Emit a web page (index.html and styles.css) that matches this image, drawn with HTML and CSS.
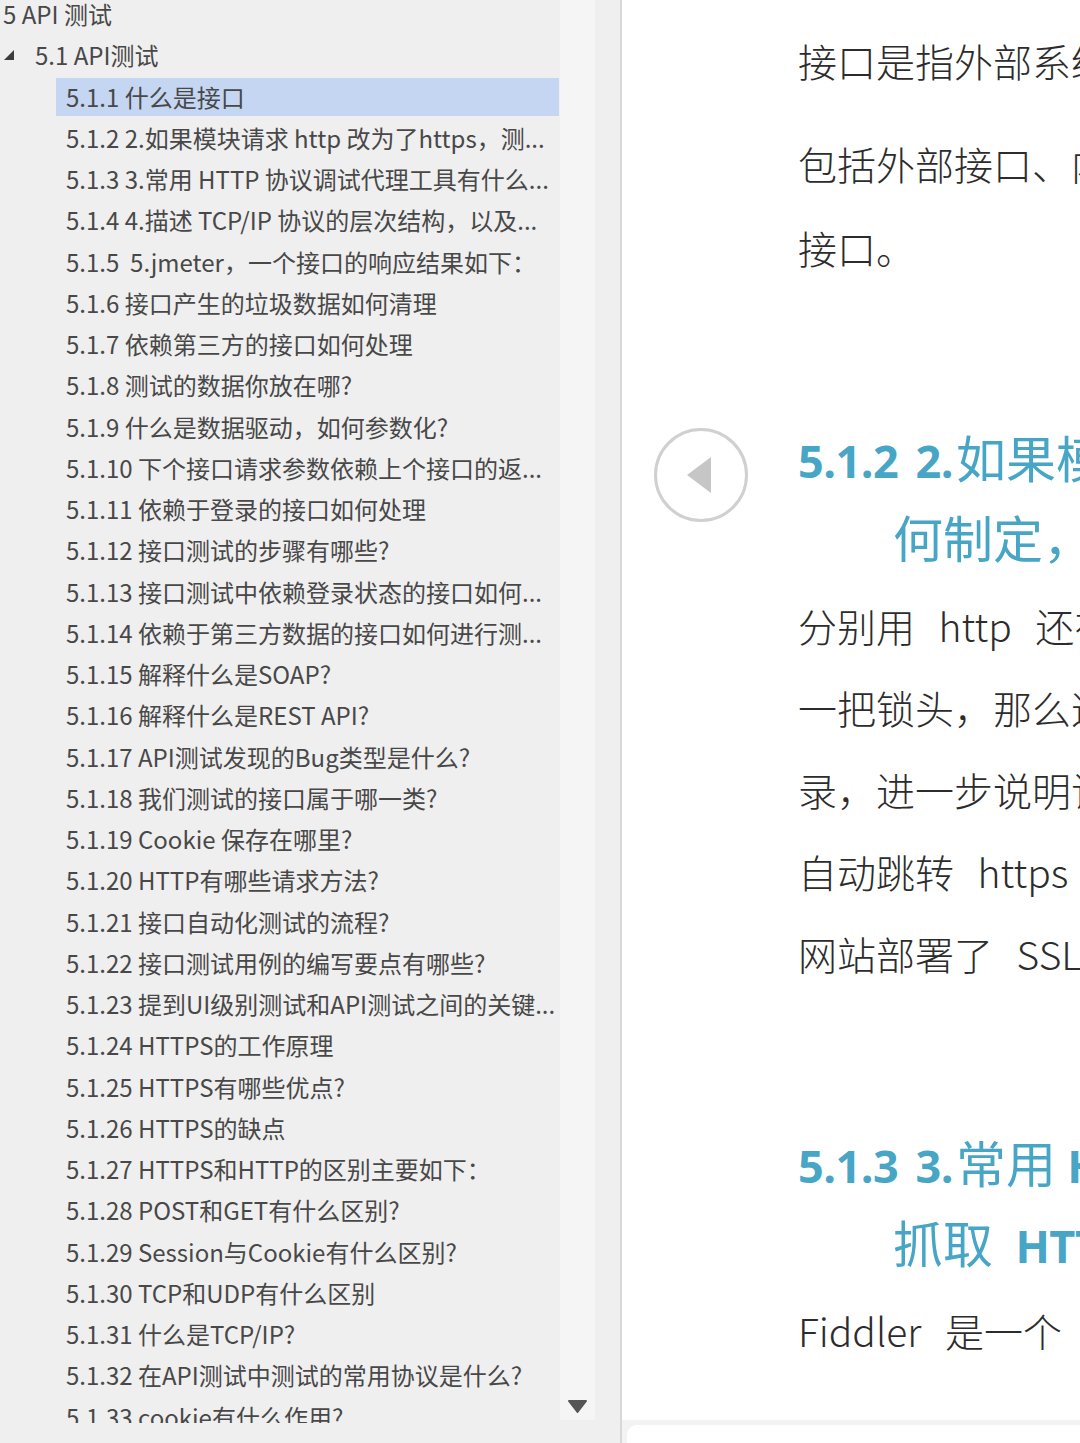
FILE: index.html
```html
<!DOCTYPE html>
<html lang="zh-CN">
<head>
  <meta charset="UTF-8" />
  <meta name="viewport" content="width=device-width, initial-scale=1" />
  <title>API 测试</title>
  <link rel="stylesheet" href="styles.css">
</head>
<body>
  <aside class="toc">
    <div class="toc-list">
      <div class="toc-rows">
        <div class="row l1">5 API 测试</div>
        <div class="row l2">
          <svg class="caret" width="10" height="10" viewBox="0 0 10 10"><polygon points="10,0 10,10 0,10" /></svg>
          <span>5.1 API测试</span>
        </div>
        <div class="row l3 active">5.1.1 什么是接口</div>
        <div class="row l3">5.1.2 2.如果模块请求 http 改为了https，测...</div>
        <div class="row l3">5.1.3 3.常用 HTTP 协议调试代理工具有什么...</div>
        <div class="row l3">5.1.4 4.描述 TCP/IP 协议的层次结构，以及...</div>
        <div class="row l3">5.1.5 &nbsp;5.jmeter，一个接口的响应结果如下：</div>
        <div class="row l3">5.1.6 接口产生的垃圾数据如何清理</div>
        <div class="row l3">5.1.7 依赖第三方的接口如何处理</div>
        <div class="row l3">5.1.8 测试的数据你放在哪?</div>
        <div class="row l3">5.1.9 什么是数据驱动，如何参数化?</div>
        <div class="row l3">5.1.10 下个接口请求参数依赖上个接口的返...</div>
        <div class="row l3">5.1.11 依赖于登录的接口如何处理</div>
        <div class="row l3">5.1.12 接口测试的步骤有哪些?</div>
        <div class="row l3">5.1.13 接口测试中依赖登录状态的接口如何...</div>
        <div class="row l3">5.1.14 依赖于第三方数据的接口如何进行测...</div>
        <div class="row l3">5.1.15 解释什么是SOAP?</div>
        <div class="row l3">5.1.16 解释什么是REST API?</div>
        <div class="row l3">5.1.17 API测试发现的Bug类型是什么?</div>
        <div class="row l3">5.1.18 我们测试的接口属于哪一类?</div>
        <div class="row l3">5.1.19 Cookie 保存在哪里?</div>
        <div class="row l3">5.1.20 HTTP有哪些请求方法?</div>
        <div class="row l3">5.1.21 接口自动化测试的流程?</div>
        <div class="row l3">5.1.22 接口测试用例的编写要点有哪些?</div>
        <div class="row l3">5.1.23 提到UI级别测试和API测试之间的关键...</div>
        <div class="row l3">5.1.24 HTTPS的工作原理</div>
        <div class="row l3">5.1.25 HTTPS有哪些优点?</div>
        <div class="row l3">5.1.26 HTTPS的缺点</div>
        <div class="row l3">5.1.27 HTTPS和HTTP的区别主要如下：</div>
        <div class="row l3">5.1.28 POST和GET有什么区别?</div>
        <div class="row l3">5.1.29 Session与Cookie有什么区别?</div>
        <div class="row l3">5.1.30 TCP和UDP有什么区别</div>
        <div class="row l3">5.1.31 什么是TCP/IP?</div>
        <div class="row l3">5.1.32 在API测试中测试的常用协议是什么?</div>
        <div class="row l3">5.1.33 cookie有什么作用?</div>
      </div>
    </div>
    <div class="scrollbar">
      <svg class="arrow-down" width="19" height="13" viewBox="0 0 19 13"><polygon points="1,1 18,1 9.5,12" stroke-linejoin="round" /></svg>
    </div>
  </aside>

  <main class="viewer">
    <div class="page">
      <p class="first">接口是指外部系统与系统之间以及内部各个子系统之间的交互点。</p>
      <p class="tall">包括外部接口、内部接口，内部接口又包括：上层服务与下层服务</p>
      <p class="tall">接口。</p>

      <h2>
        <span class="h-line"><b>5.1.2 2.</b>如果模块请求 <b>http</b> 改为了 <b>https</b>，测试方案应该如</span>
        <span class="h-line cont">何制定，修改？</span>
      </h2>
      <p>分别用 http 还有 https 访问该网站，查看浏览器地址栏是否出现</p>
      <p>一把锁头，那么这个网站就是使用了 https 的，再查看证书信息</p>
      <p>录，进一步说明该网站是否部署了有效的 SSL 证书，如果</p>
      <p>自动跳转 https 链接，说明服务端做了强制跳转的配置</p>
      <p>网站部署了 SSL，但仍然可以使用 http 访问时需要补充测试</p>

      <h2>
        <span class="h-line"><b>5.1.3 3.</b>常用 <b>HTTP</b> 协议调试代理工具有什么？详细说明</span>
        <span class="h-line cont">抓取 &nbsp;<b>HTTPS</b> 协议的设置过程？</span>
      </h2>
      <p>Fiddler 是一个 http 协议调试代理工具，它能够记录并检查</p>
    </div>
    <div class="page next"></div>

    <button class="nav-prev" type="button" aria-label="上一页">
      <svg width="26" height="38" viewBox="0 0 26 38"><polygon points="1,19 25,1 25,37" /></svg>
    </button>
  </main>
</body>
</html>
```

FILE: styles.css
```css
body {
  margin: 0;
  height: 100vh;
  display: flex;
  overflow: hidden;
  font-family: "Noto Sans CJK SC", "Noto Sans", sans-serif;
  background: #efefef;
}

/* left outline panel */
.toc {
  width: 620px;
  flex: none;
  display: flex;
  background: #efefef;
  border-right: 2px solid #d8d8d8;
}

.toc-list {
  width: 560px;
  height: 1423px;
  overflow: hidden;
}

.toc-rows {
  margin-top: -5px;
}

.row {
  height: 38px;
  line-height: 38px;
  margin-bottom: 3.25px;
  font-size: 24px;
  color: #484848;
  white-space: nowrap;
  overflow: hidden;
  text-overflow: ellipsis;
}

.row.l1 {
  padding-left: 3px;
}

.row.l2 {
  display: flex;
  align-items: center;
  padding-left: 4px;
}
.row.l2 .caret {
  margin-right: 21px;
  fill: #3c3c3c;
}

.row.l3 {
  margin-left: 56px;
  margin-right: 1px;
  padding-left: 10px;
}

.row.active {
  background: #c4d6f1;
}

.scrollbar {
  width: 35px;
  height: 1420px;
  background: #f5f5f5;
  display: flex;
  flex-direction: column;
  justify-content: flex-end;
  align-items: center;
  padding-bottom: 7px;
  box-sizing: border-box;
}
.arrow-down {
  fill: #555;
  stroke: #555;
  stroke-width: 2;
}

/* document viewer */
.viewer {
  flex: 1;
  position: relative;
  overflow: hidden;
  background: #f3f3f3;
}

.page {
  height: 1420px;
  box-sizing: border-box;
  padding: 18px 0 0 176px;
  background: #fff;
  color: #2c2c2c;
  font-size: 39px;
  font-weight: 300;
  white-space: nowrap;
  overflow: hidden;
}
.page.next {
  height: 40px;
  margin: 5px 0 0 5px;
  border-top-left-radius: 10px;
}

.page p {
  margin: 0;
  line-height: 82px;
  word-spacing: 15px;
}
.page p.first {
  line-height: 84px;
  margin-bottom: 19px;
}
.page p.tall {
  line-height: 84px;
}

.page h2 {
  margin: 127px 0 8px;
  font-size: 50px;
  font-weight: 400;
  color: #47a5c5;
}
.page h2 b {
  font-family: "Open Sans", sans-serif;
  font-size: 45px;
  font-weight: 700;
  line-height: 1;
  letter-spacing: -0.5px;
  word-spacing: 6px;
  margin-right: 3px;
}
.h-line {
  display: block;
  height: 80px;
  line-height: 80px;
}
.h-line.cont {
  padding-left: 95px;
}

.nav-prev {
  position: absolute;
  left: 32px;
  top: 428px;
  width: 94px;
  height: 94px;
  padding: 0;
  border: 3px solid #d0d0d0;
  border-radius: 50%;
  background: #fff;
  display: flex;
  align-items: center;
  justify-content: center;
  cursor: pointer;
}
.nav-prev svg {
  fill: #c6c6c6;
  margin-left: -4px;
}
```
